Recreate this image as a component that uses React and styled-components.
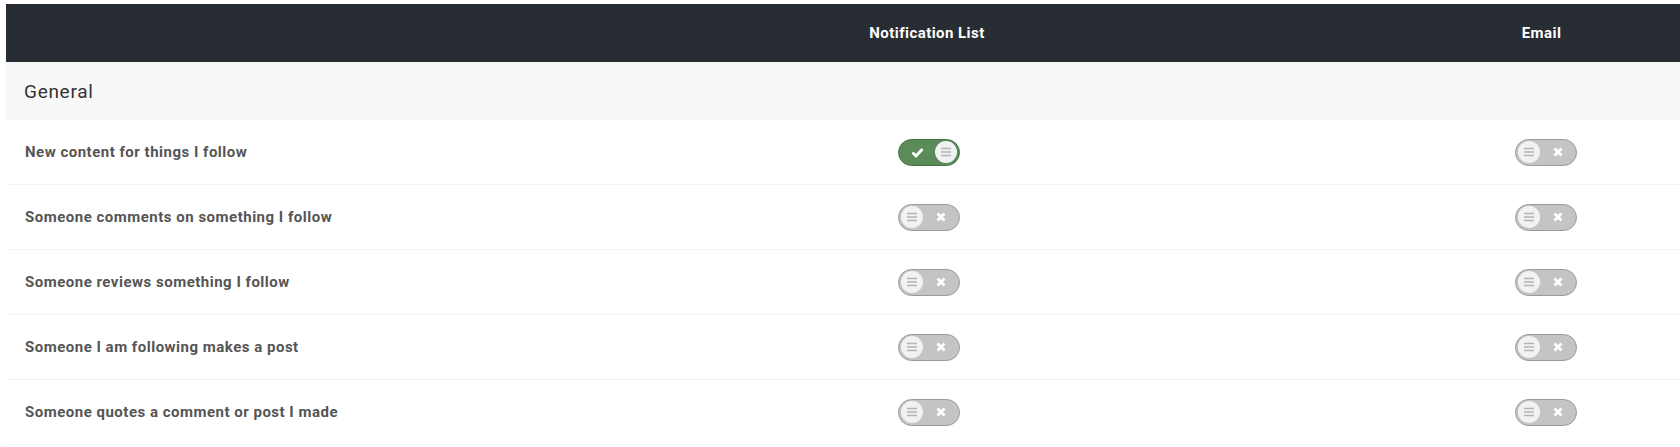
import React, { useState } from "react";
import styled, { createGlobalStyle } from "styled-components";

const GlobalStyle = createGlobalStyle`
	html, body {
		margin: 0;
		padding: 0;
		background: #fff;
		overflow: hidden;
	}
	body {
		font-family: Roboto, "Liberation Sans", sans-serif;
	}
`;

const rows = [
	{ label: "New content for things I follow", list: true, email: false },
	{ label: "Someone comments on something I follow", list: false, email: false },
	{ label: "Someone reviews something I follow", list: false, email: false },
	{ label: "Someone I am following makes a post", list: false, email: false },
	{ label: "Someone quotes a comment or post I made", list: false, email: false }
];

const Page = styled.div`
	padding: 4px 0 0 6px;
	width: 1674px;
`;

const Grid = styled.div`
	display: grid;
	grid-template-columns: 850px 142px 1fr 272px;
`;

const HeadRow = styled(Grid)`
	height: 58px;
	background: #272d33;
	color: #fff;
	font-size: 15px;
	font-weight: 700;
	letter-spacing: 0.45px;
	align-items: center;

	span {
		text-align: center;
	}
	span:last-child {
		padding-right: 5px;
	}
`;

const Section = styled.div`
	height: 58px;
	background: #f8f8f8;
	display: flex;
	align-items: center;
	padding-left: 18px;
	font-size: 19px;
	color: #333;
	letter-spacing: 0.7px;
`;

const Row = styled(Grid)`
	height: 64px;
	align-items: center;
	border-bottom: 1px solid #f3f3f3;
`;

const Label = styled.div`
	padding-left: 19px;
	font-size: 15px;
	font-weight: 700;
	letter-spacing: 0.5px;
	color: #555;
`;

const Cell = styled.div`
	display: flex;
	justify-content: center;
`;

const Switch = styled.button`
	width: 62px;
	height: 27px;
	box-sizing: border-box;
	border-radius: 14px;
	border: 1.5px solid ${p => (p.$on ? "#477447" : "#9a9a9a")};
	background: ${p => (p.$on ? "#5a8b59" : "#c4c4c4")};
	padding: 0 2px;
	display: flex;
	align-items: center;
	gap: 6px;
	flex-direction: ${p => (p.$on ? "row-reverse" : "row")};
	justify-content: flex-start;
	cursor: pointer;
	margin-left: 4px;
`;

const Knob = styled.span`
	flex: none;
	width: 22px;
	height: 22px;
	border-radius: 50%;
	background: #f2f2f2;
	display: flex;
	align-items: center;
	justify-content: center;
`;

const Mark = styled.span`
	flex: none;
	width: 24px;
	display: flex;
	justify-content: center;
	align-items: center;
`;

const Lines = () => (
	<svg width="12" height="10" viewBox="0 0 12 10">
		<path d="M1 1.5h10M1 5h10M1 8.5h10" stroke="#b4b4b4" strokeWidth="1.6" />
	</svg>
);

const Check = () => (
	<svg width="13" height="11" viewBox="0 0 13 11">
		<path d="M1.5 5.5l3.5 3.5 6.5-7" fill="none" stroke="#fff" strokeWidth="2.8" />
	</svg>
);

const Cross = () => (
	<svg width="10" height="10" viewBox="0 0 10 10">
		<path d="M1.5 1.5l7 7M8.5 1.5l-7 7" stroke="#fff" strokeWidth="2.8" />
	</svg>
);

const Toggle = ({ on, onClick }) => (
	<Switch $on={on} onClick={onClick}>
		<Knob>
			<Lines />
		</Knob>
		<Mark>{on ? <Check /> : <Cross />}</Mark>
	</Switch>
);

export default function App() {
	const [data, setData] = useState(rows);
	const flip = (i, key) =>
		setData(d => d.map((r, j) => (j === i ? { ...r, [key]: !r[key] } : r)));

	return (
		<Page>
			<GlobalStyle />
			<HeadRow>
				<span />
				<span>Notification List</span>
				<span />
				<span>Email</span>
			</HeadRow>
			<Section>General</Section>
			{data.map((r, i) => (
				<Row key={r.label}>
					<Label>{r.label}</Label>
					<Cell>
						<Toggle on={r.list} onClick={() => flip(i, "list")} />
					</Cell>
					<span />
					<Cell>
						<Toggle on={r.email} onClick={() => flip(i, "email")} />
					</Cell>
				</Row>
			))}
		</Page>
	);
}
